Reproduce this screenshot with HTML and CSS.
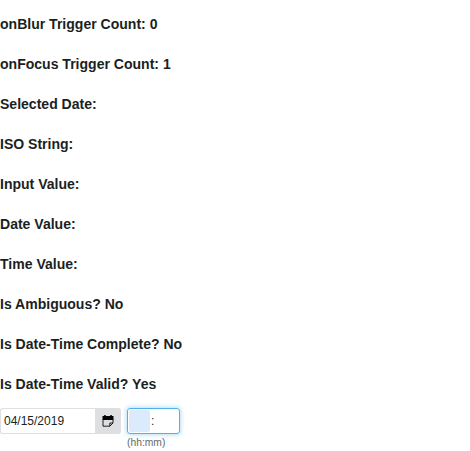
FILE: index.html
```html
<!DOCTYPE html>
<html lang="en">
<head>
<meta charset="utf-8">
<title>Date Time Input</title>
<link rel="stylesheet" href="styles.css">
</head>
<body>
<h3>onBlur Trigger Count: 0</h3>
<h3>onFocus Trigger Count: 1</h3>
<h3>Selected Date:</h3>
<h3>ISO String:</h3>
<h3>Input Value:</h3>
<h3>Date Value:</h3>
<h3>Time Value:</h3>
<h3>Is Ambiguous? No</h3>
<h3>Is Date-Time Complete? No</h3>
<h3>Is Date-Time Valid? Yes</h3>
<div class="date-time">
  <div class="date-field">
    <div class="date-value">04/15/2019</div>
    <div class="calendar-button">
      <svg width="12" height="12" viewBox="0 0 12 12"><path d="M.5 1h1.7V0h1.5v1h4.6V0h1.5v1h1.7v4H.5z" fill="#000"/><path d="M1 4.5V11.2H7.8L11 8V4.5M7.8 11.2V8H11" fill="none" stroke="#000" stroke-width=".85" stroke-linejoin="round"/></svg>
    </div>
  </div>
  <div class="time-field">
    <div class="time-input"><span class="hour"></span><span class="separator">:</span></div>
    <div class="format">(hh:mm)</div>
  </div>
</div>
</body>
</html>
```
FILE: styles.css
```css
body {
  margin: 0;
  padding-top: 14px;
  background: #fff;
  color: #1c1f21;
  font-family: "Liberation Sans", Arial, sans-serif;
  font-size: 12px;
}

h3 {
  margin: 0 0 20px;
  font-size: 1.17em;
  font-weight: bold;
  line-height: 20px;
}

.date-time {
  display: flex;
  align-items: flex-start;
  gap: 6px;
  margin-top: -6px;
}

.date-field {
  display: flex;
  box-sizing: border-box;
  width: 121px;
  height: 26px;
}

.date-value {
  flex: 1;
  box-sizing: border-box;
  padding-left: 3px;
  border: 1px solid #dedfe0;
  border-right: 0;
  border-radius: 3px 0 0 3px;
  line-height: 24px;
}

.calendar-button {
  display: flex;
  align-items: center;
  justify-content: center;
  width: 26px;
  border-radius: 0 3px 3px 0;
  background: #dedfe0;
}

.time-input {
  display: flex;
  box-sizing: border-box;
  width: 53px;
  height: 26px;
  padding: 1px;
  border: 1px solid #4cb2e9;
  border-radius: 3px;
  box-shadow: 0 0 4px 1px rgba(76, 178, 233, 0.4);
}

.hour {
  width: 21px;
  border-radius: 2px;
  background: #dcebfc;
}

.separator {
  margin-left: 1px;
  line-height: 22px;
}

.format {
  margin-top: 2px;
  color: #64696c;
  font-size: 10.3px;
  line-height: 13px;
}
```
